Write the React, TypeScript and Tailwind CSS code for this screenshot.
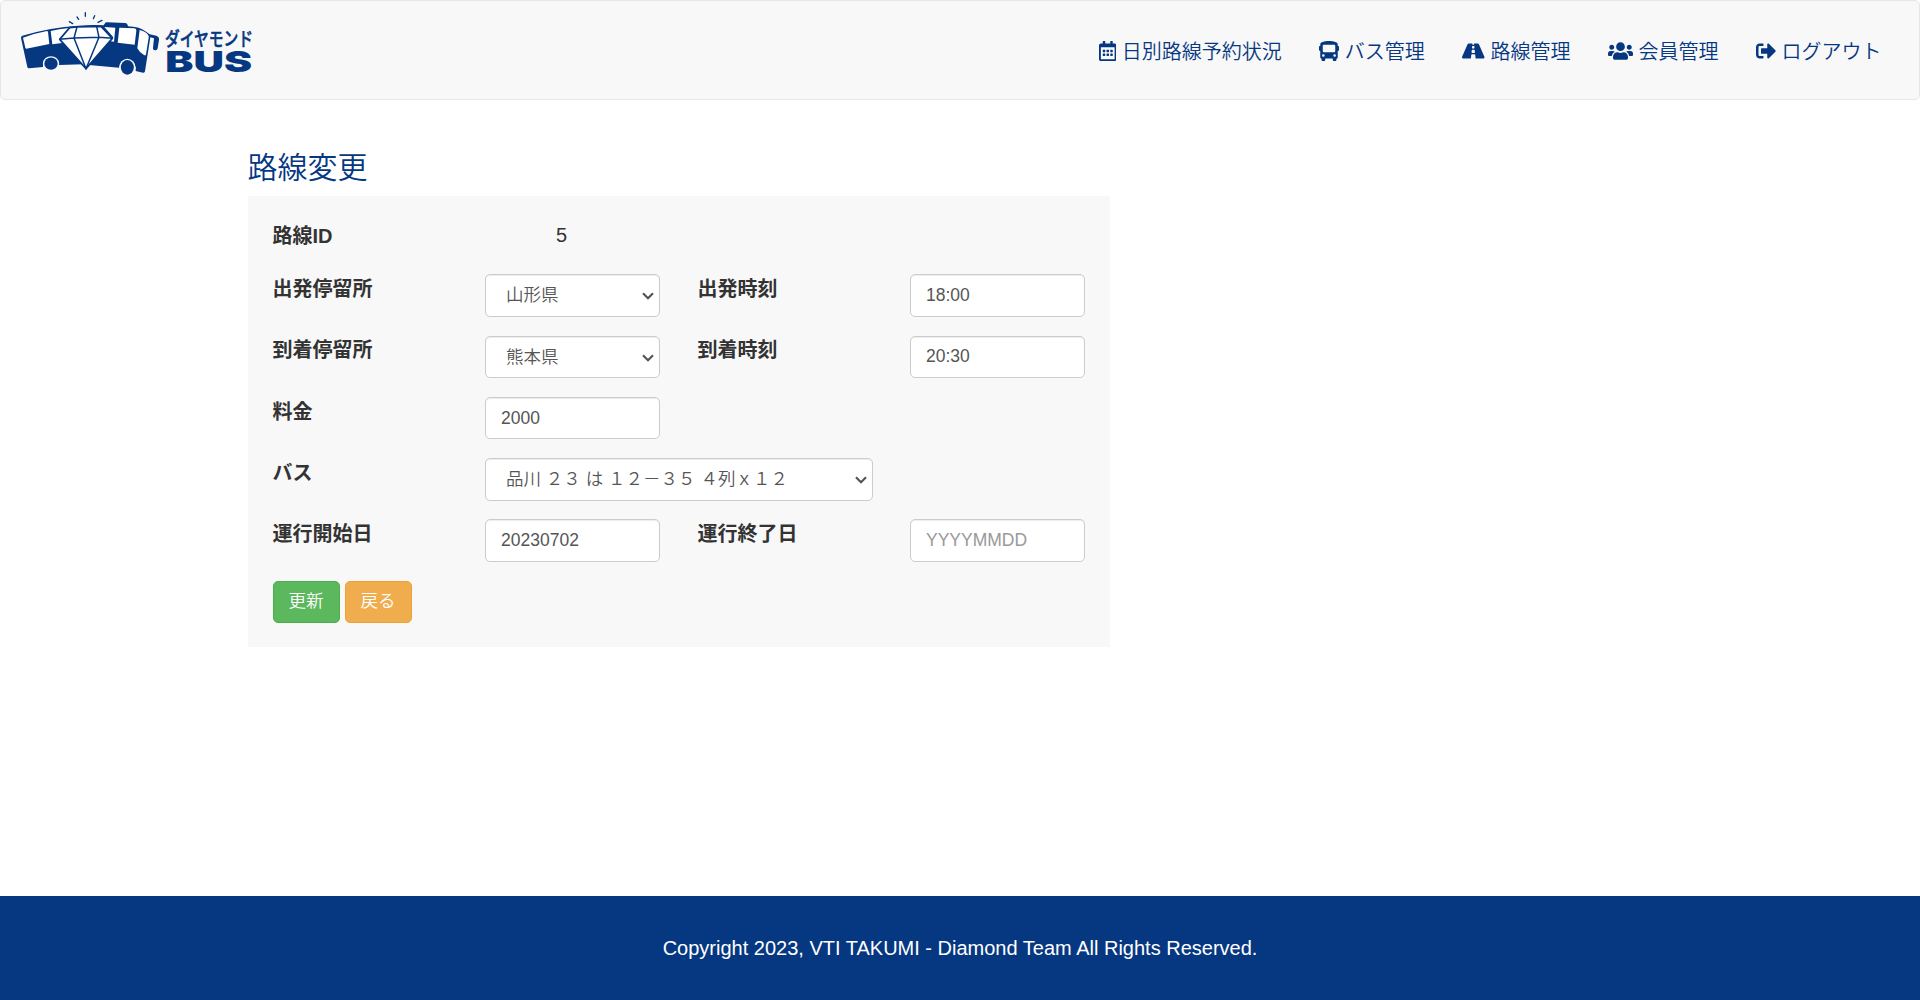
import type { ReactNode } from 'react';
import { FaBus, FaRoad, FaUsers, FaSignOutAlt, FaRegCalendarAlt } from 'react-icons/fa';

function Logo() {
  return (
    <svg viewBox="0 0 840 294" className="h-[98px] w-[280px] shrink-0 overflow-visible" fill="#063781">
      <g transform="translate(45 15)">
        <path d="M163 50l10 6M186 36l5 7M211 23v11M239 32l-4 9M261 46l-12 6" stroke="#063781" strokeWidth="4" strokeLinecap="round" />
        <path d="M18 99Q17 94 22 92Q106 67 190 62Q230 59 266 61L269 56Q271 52 276 52L330 54Q337 54 338 60L339 64Q372 65 390 78L404 88L424 92Q433 95 432 104L428 130Q427 136 422 136L419 136Q413 135 414 129L417 100L406 97L390 199Q389 204 384 203L362 198A25 27 0 0 0 312 188L222 180L213 195L204 178L132 180A24 24 0 0 0 84 186L42 190Q38 190 37 186Z" />
        <g fill="#fff">
          <path d="M24 98q34-13 72-20 2 0 3 3l4 36-69 14q-2 0-3-3z" />
          <path d="M107 78q24-6 55-9l-29 34 14 10-35 5z" />
          <path d="M268 66l33 2-4 42-14-2 12-11z" />
          <path d="M313 68l45 2q7 1 6 7l-5 42-51-6z" />
          <path d="M374 75Q390 78 399 89Q402 92 401 98L393 148Q392 153 387 150Q374 144 367 130Z" />
        </g>
        <path d="M164 68l22-2 72-2 34 36-79 91-79-88z" fill="#fff" stroke="#063781" strokeWidth="5" strokeLinejoin="round" />
        <path d="M186 66l-9 33 36 92 39-94-7-32M134 103l43-4 75-2 40 3" fill="none" stroke="#063781" strokeWidth="4.5" strokeLinejoin="round" />
        <ellipse cx="108" cy="176" rx="24.5" ry="22.5" fill="#f8f8f8" />
        <ellipse cx="108" cy="176" rx="20" ry="18.5" />
        <ellipse cx="337" cy="187" rx="24.5" ry="26" fill="#f8f8f8" />
        <ellipse cx="337" cy="187" rx="19.5" ry="22" />
      </g>
      <text x="495" y="138" fontSize="58" fontWeight="500" textLength="264" lengthAdjust="spacingAndGlyphs" fontFamily="'Noto Sans CJK JP', sans-serif" stroke="#063781" strokeWidth="1.5">ダイヤモンド</text>
      <text x="496" y="217" fontSize="87" fontWeight="900" textLength="260" lengthAdjust="spacingAndGlyphs" fontFamily="Inter, sans-serif">BUS</text>
    </svg>
  );
}

function NavItem({ icon, children }: { icon: ReactNode; children: ReactNode }) {
  return (
    <a href="#" className="flex items-center gap-[5.56px] whitespace-nowrap text-[20px] leading-[30px] font-[350] text-[#063781]">
      {icon}
      <span className="relative top-px">{children}</span>
    </a>
  );
}

function Label({ children }: { children: ReactNode }) {
  return <label className="block pt-[0.75px] text-[20px] leading-[29px] font-bold text-[#333]">{children}</label>;
}

const field =
  'h-[42.5px] w-full appearance-none rounded-[5px] border border-[#ccc] bg-white pr-[15px] text-[17.5px] text-[#555] shadow-[inset_0_1px_1px_rgba(0,0,0,0.075)] outline-none placeholder:text-[#999]';

function Input({ value, placeholder }: { value?: string; placeholder?: string }) {
  return <input type="text" defaultValue={value} placeholder={placeholder} className={`${field} pl-[15px]`} />;
}

function Select({ value }: { value: string }) {
  return (
    <div className="relative">
      <select className={`${field} block pl-[20px] font-[350]`}>
        <option>{value}</option>
      </select>
      <svg viewBox="0 0 12 8" className="pointer-events-none absolute right-[6px] top-[18px] h-2 w-3" fill="none" stroke="#555" strokeWidth="2.2">
        <path d="M1 1.3l5 5 5-5" />
      </svg>
    </div>
  );
}

function Row({ children }: { children: ReactNode }) {
  return <div className="mb-[18.75px] grid h-[42.5px] grid-cols-4 gap-x-[37.5px]">{children}</div>;
}

export default function App() {
  return (
    <div className="flex h-[1000px] flex-col bg-white font-['Liberation_Sans','Noto_Sans_CJK_JP',sans-serif] text-[#333]">
      <header className="flex h-[100px] shrink-0 items-start justify-between rounded-[5px] border border-[#e7e7e7] bg-[#f8f8f8]">
        <div className="-ml-px -mt-px">
          <Logo />
        </div>
        <nav className="mr-[37.5px] mt-[34.5px] flex gap-[37.5px]">
          <NavItem icon={<FaRegCalendarAlt className="h-5 w-[17.5px]" />}>日別路線予約状況</NavItem>
          <NavItem icon={<FaBus className="h-5 w-5" />}>バス管理</NavItem>
          <NavItem icon={<FaRoad className="h-5 w-[22.5px]" />}>路線管理</NavItem>
          <NavItem icon={<FaUsers className="h-5 w-[25px]" />}>会員管理</NavItem>
          <NavItem icon={<FaSignOutAlt className="h-5 w-5" />}>ログアウト</NavItem>
        </nav>
      </header>

      <main className="flex-1 pl-[247.5px] pt-[51px]">
        <h1 className="h-[45px] text-[30px] leading-[33px] font-[350] text-[#063781]">路線変更</h1>
        <form className="h-[451px] w-[862.5px] bg-[#f8f8f8] px-[25px] pt-[25px]">
          <div className="grid h-[53.25px] grid-cols-4 gap-x-[37.5px]">
            <Label>路線ID</Label>
            <p className="pr-[22px] text-center text-[20px] leading-[29px]">5</p>
          </div>
          <Row>
            <Label>出発停留所</Label>
            <Select value="山形県" />
            <Label>出発時刻</Label>
            <Input value="18:00" />
          </Row>
          <Row>
            <Label>到着停留所</Label>
            <Select value="熊本県" />
            <Label>到着時刻</Label>
            <Input value="20:30" />
          </Row>
          <Row>
            <Label>料金</Label>
            <Input value="2000" />
          </Row>
          <Row>
            <Label>バス</Label>
            <div className="col-span-2 w-[387.5px]">
              <Select value="品川 ２３ は １２－３５ ４列ｘ１２" />
            </div>
          </Row>
          <Row>
            <Label>運行開始日</Label>
            <Input value="20230702" />
            <Label>運行終了日</Label>
            <Input placeholder="YYYYMMDD" />
          </Row>
          <div className="flex gap-[5px]">
            <button type="button" className="h-[42px] w-[67px] rounded-[5px] border border-[#4cae4c] bg-[#5cb85c] text-[17.5px] font-[350] text-white">更新</button>
            <button type="button" className="h-[42px] w-[67px] rounded-[5px] border border-[#eea236] bg-[#f0ad4e] text-[17.5px] font-[350] text-white">戻る</button>
          </div>
        </form>
      </main>

      <footer className="flex h-[104px] shrink-0 items-center justify-center bg-[#063781] text-[20px] text-white">
        Copyright 2023, VTI TAKUMI - Diamond Team All Rights Reserved.
      </footer>
    </div>
  );
}
